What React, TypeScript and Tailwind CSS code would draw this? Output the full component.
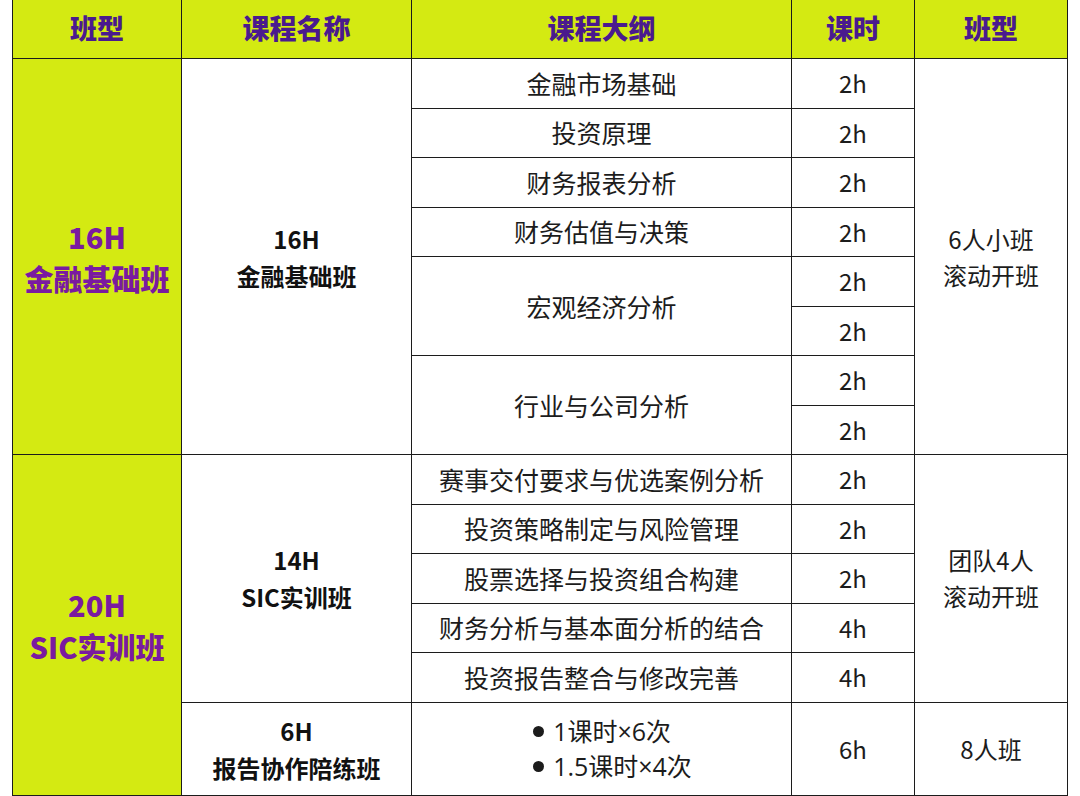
import React from "react";

const font = { fontFamily: '"Noto Sans CJK SC", "Noto Sans", sans-serif' };

const td = "border-[1.5px] border-[#1c1c1c] text-center align-middle p-0";
const lime = "bg-[#d4ea12]";

function Row({ h = "h-[49.5px]", children }: { h?: string; children: React.ReactNode }) {
  return <tr className={h}>{children}</tr>;
}

function Outline({ children }: { children: React.ReactNode }) {
  return <td className={`${td} text-[25px] leading-none text-[#1c1c1c]`}>{children}</td>;
}

function Hours({ children }: { children: React.ReactNode }) {
  return <td className={`${td} text-[24px] leading-none text-[#1c1c1c]`}>{children}</td>;
}

function Bullet({ children }: { children: React.ReactNode }) {
  return (
    <div className="flex items-center gap-[9px]">
      <span className="h-[11px] w-[11px] rounded-full bg-[#1c1c1c]" />
      <span>{children}</span>
    </div>
  );
}

export default function App() {
  return (
    <div className="min-h-[796px] w-[1080px] overflow-hidden bg-white pl-[12px]" style={font}>
      <table className="mt-[-1px] table-fixed border-collapse">
        <colgroup>
          <col className="w-[169px]" />
          <col className="w-[230px]" />
          <col className="w-[380px]" />
          <col className="w-[123px]" />
          <col className="w-[153px]" />
        </colgroup>
        <thead>
          <tr className="h-[59px]">
            {["班型", "课程名称", "课程大纲", "课时", "班型"].map((t, i) => (
              <th key={i} className={`${td} ${lime} pb-[2px] text-[27px] font-black text-[#4a1a8e]`}>
                {t}
              </th>
            ))}
          </tr>
        </thead>
        <tbody>
          <Row>
            <td rowSpan={8} className={`${td} ${lime} text-[29px] font-black leading-[42px] text-[#7a1aa0]`}>
              16H
              <br />
              金融基础班
            </td>
            <td rowSpan={8} className={`${td} text-[24px] font-bold leading-[37px] text-[#111]`}>
              16H
              <br />
              金融基础班
            </td>
            <Outline>金融市场基础</Outline>
            <Hours>2h</Hours>
            <td rowSpan={8} className={`${td} text-[24px] leading-[36px] text-[#1c1c1c]`}>
              6人小班
              <br />
              滚动开班
            </td>
          </Row>
          <Row>
            <Outline>投资原理</Outline>
            <Hours>2h</Hours>
          </Row>
          <Row>
            <Outline>财务报表分析</Outline>
            <Hours>2h</Hours>
          </Row>
          <Row>
            <Outline>财务估值与决策</Outline>
            <Hours>2h</Hours>
          </Row>
          <Row>
            <td rowSpan={2} className={`${td} text-[25px] leading-none text-[#1c1c1c]`}>
              宏观经济分析
            </td>
            <Hours>2h</Hours>
          </Row>
          <Row>
            <Hours>2h</Hours>
          </Row>
          <Row>
            <td rowSpan={2} className={`${td} text-[25px] leading-none text-[#1c1c1c]`}>
              行业与公司分析
            </td>
            <Hours>2h</Hours>
          </Row>
          <Row>
            <Hours>2h</Hours>
          </Row>
          <Row>
            <td rowSpan={6} className={`${td} ${lime} text-[29px] font-black leading-[42px] text-[#7a1aa0]`}>
              20H
              <br />
              SIC实训班
            </td>
            <td rowSpan={5} className={`${td} text-[24px] font-bold leading-[37px] text-[#111]`}>
              14H
              <br />
              SIC实训班
            </td>
            <Outline>赛事交付要求与优选案例分析</Outline>
            <Hours>2h</Hours>
            <td rowSpan={5} className={`${td} text-[24px] leading-[36px] text-[#1c1c1c]`}>
              团队4人
              <br />
              滚动开班
            </td>
          </Row>
          <Row>
            <Outline>投资策略制定与风险管理</Outline>
            <Hours>2h</Hours>
          </Row>
          <Row>
            <Outline>股票选择与投资组合构建</Outline>
            <Hours>2h</Hours>
          </Row>
          <Row>
            <Outline>财务分析与基本面分析的结合</Outline>
            <Hours>4h</Hours>
          </Row>
          <Row>
            <Outline>投资报告整合与修改完善</Outline>
            <Hours>4h</Hours>
          </Row>
          <Row h="h-[93px]">
            <td className={`${td} text-[24px] font-bold leading-[37px] text-[#111]`}>
              6H
              <br />
              报告协作陪练班
            </td>
            <td className={`${td} text-[25px] leading-[35px] text-[#1c1c1c]`}>
              <div
                className="inline-block pl-[22px] text-left"
                style={{ fontFamily: '"Open Sans", "Noto Sans CJK SC", sans-serif' }}
              >
                <Bullet>1课时×6次</Bullet>
                <Bullet>1.5课时×4次</Bullet>
              </div>
            </td>
            <Hours>6h</Hours>
            <td className={`${td} text-[24px] leading-none text-[#1c1c1c]`}>8人班</td>
          </Row>
        </tbody>
      </table>
    </div>
  );
}
